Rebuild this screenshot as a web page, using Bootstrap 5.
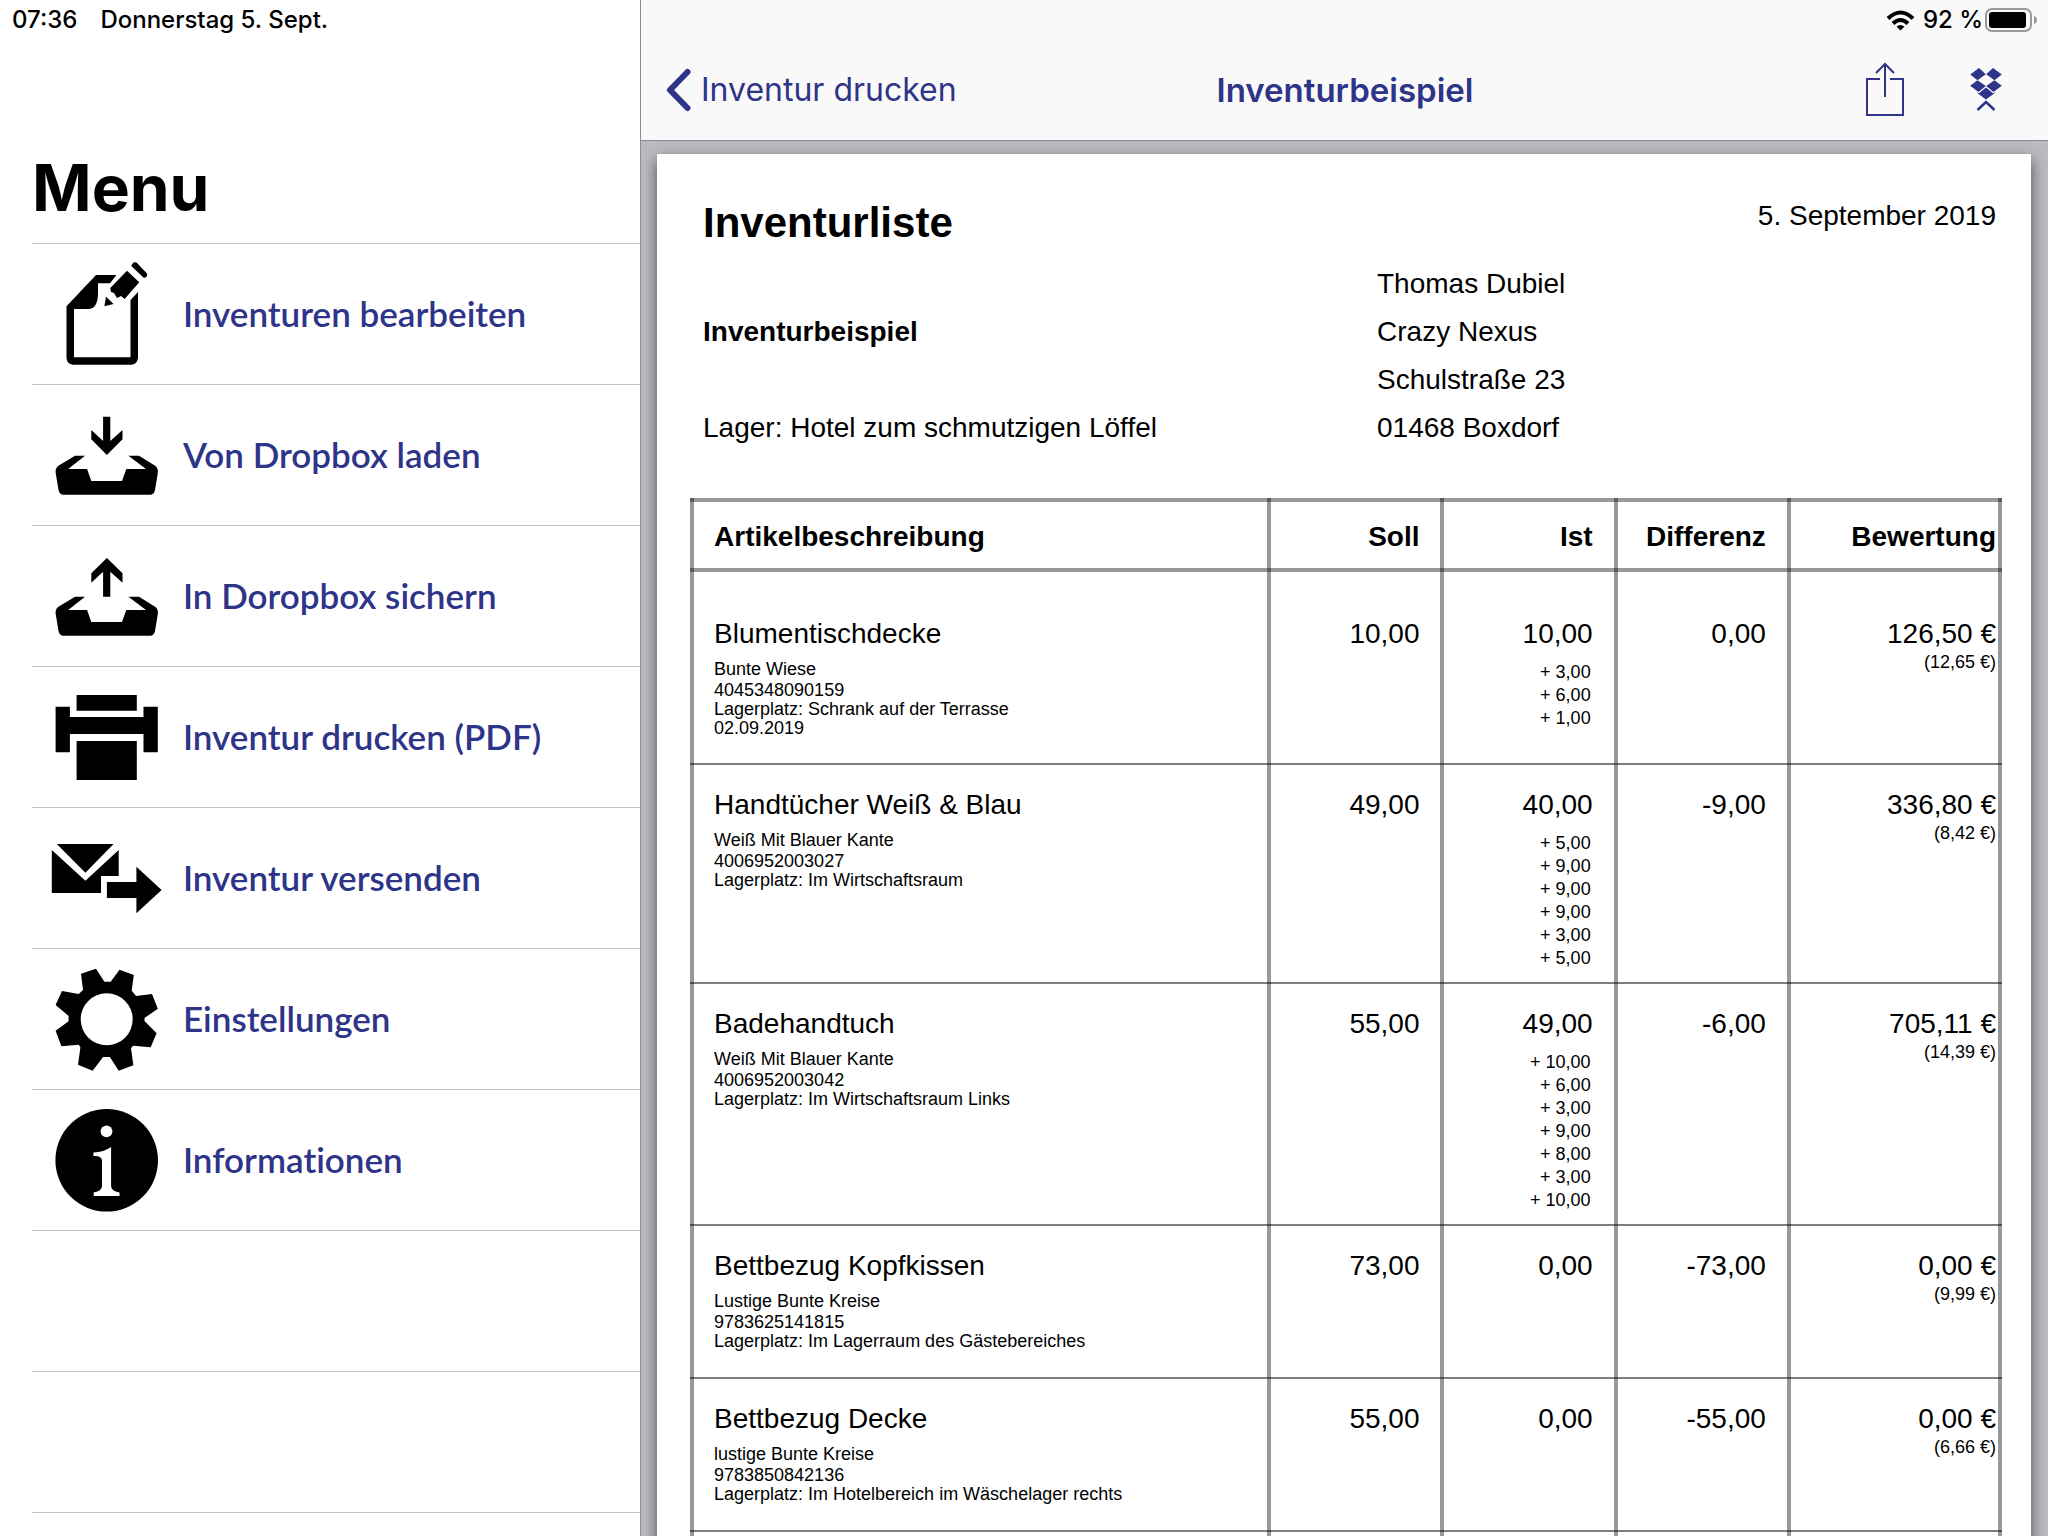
<!DOCTYPE html>
<html lang="de">
<head>
<meta charset="utf-8">
<meta name="viewport" content="width=device-width, initial-scale=1">
<title>Inventurbeispiel</title>
<link href="https://cdn.jsdelivr.net/npm/bootstrap@5.3.0/dist/css/bootstrap.min.css" rel="stylesheet">
<style>
  :root { --brand: #2e3488; --hairline: #c4c4c6; --rule: rgba(0, 0, 0, .4); }
  body { font-family: Inter, "Liberation Sans", sans-serif; color: #000; background: #fff; }
  .btn-plain { color: var(--brand); background: none; border: 0; padding: 0; line-height: 0; }
  .status { height: 40px; font-size: 24px; line-height: 40px; font-weight: 500; }

  .side { width: 31.3%; border-right: 1px solid #8e8e93; }
  .side .status { gap: 23px; padding-left: 12px; }
  .side-title { font-size: 64px; line-height: 72px; font-weight: 700; margin: 112px 0 19px 32px; }
  .side-list { margin-left: 32px; }
  .side-list li { height: 141px; border-top: 1px solid var(--hairline); }
  .side-list li:last-child { border-bottom: 1px solid var(--hairline); height: 142px; }
  .side-list a { height: 140px; gap: 20px; padding-left: 19px; color: var(--brand);
    font: 600 35px/40px Lato, "Open Sans", sans-serif; font-variant-ligatures: none; text-decoration: none; }
  .side-list svg { width: 112px; height: 112px; fill: #000; flex: none; }
  .side-list span { padding-bottom: 2px; }

  .topbar { background: #f9f9f9; border-bottom: 1px solid #8a8a8e; }
  .topbar .status { gap: 8px; padding-right: 10px; }
  .topbar .battery { gap: 1px; }
  .topnav { height: 100px; display: grid; grid-template-columns: 1fr auto 1fr; align-items: center;
    padding: 0 46px 0 25px; color: var(--brand); font-size: 32px; line-height: 40px; }
  .topnav a { color: var(--brand); text-decoration: none; gap: 9px; }
  .topnav h1 { font-size: 33px; line-height: 40px; font-weight: 600; margin: 0 0 0 22px; }
  .topnav .tools { gap: 65px; }

  .viewer { background: #bbbac0; padding: 13px 17px 0 16px; }
  .sheet { background: #fff; min-height: 100%; padding: 45px 29px 0 33px; box-shadow: 0 6px 14px rgba(0, 0, 0, .6);
    font: 28px/32px "Liberation Sans", Arial, sans-serif; }
  .sheet-head { padding: 0 6px 0 13px; }
  .sheet-title { font-size: 42px; line-height: 48px; font-weight: 700; margin-bottom: 13px; }
  .sheet-date { line-height: 34px; }
  .sheet-info { display: grid; grid-template-columns: 674fr 619fr; grid-auto-rows: 48px; line-height: 48px; margin-bottom: 46px; }

  .stock { --bs-table-bg: transparent; --bs-table-color: #000; table-layout: fixed; margin: 0;
    border-collapse: separate; border-spacing: 0; }
  .stock tr { border: 0; background: linear-gradient(rgba(0, 0, 0, .5), rgba(0, 0, 0, .5)) left bottom / 100% 2px no-repeat; }
  .stock thead tr { background: linear-gradient(var(--rule), var(--rule)) left bottom / 100% 4px no-repeat,
    linear-gradient(var(--rule), var(--rule)) left top / 100% 4px no-repeat; }
  .stock tr > * { border: 0 solid var(--rule); border-left-width: 4px; padding: 24px 21px 14px 0; text-align: right; box-shadow: none; }
  .stock tr > :first-child { text-align: left; padding: 24px 0 28px 20px; font-weight: 400; }
  .stock tr > :last-child { border-right-width: 4px; padding-right: 2px; }
  .stock thead tr > *, .stock thead tr > :first-child { padding-top: 23px; padding-bottom: 19px; font-weight: 700; }
  .stock tbody tr:first-child > * { padding-top: 46px; padding-bottom: 27px; }
  .stock .meta { font-size: 18px; line-height: 19px; margin-top: 10px; }
  .stock .ean { margin-top: 2px; }
  .stock .counts { font-size: 18px; line-height: 23px; margin: 11px 2px 0 0; }
  .stock .unit { font-size: 18px; line-height: 19px; margin-top: 3px; }
</style>
<script src="https://cdn.jsdelivr.net/npm/bootstrap@5.3.0/dist/js/bootstrap.bundle.min.js"></script>
</head>
<body>
<div class="d-flex vh-100 overflow-hidden">
  <aside class="side flex-shrink-0 overflow-hidden">
    <div class="status d-flex"><span>07:36</span><span>Donnerstag 5. Sept.</span></div>
    <h2 class="side-title">Menu</h2>
    <nav aria-label="Menu">
      <ul class="side-list list-unstyled mb-0">
        <li><a href="#" class="d-flex align-items-center">
          <svg viewBox="0 0 112 112" aria-hidden="true">
            <path fill-rule="evenodd" d="M15.500 48.300L45 17H65.500L59 25.300H47V36Q46.500 51 37.400 51H23V99.300H79.500V42L87 34V100Q86 106.700 80 106.700H22Q16 106 15.500 100Z"/>
            <path d="M80.300 8Q82 3 85.500 4.500L96 15.500Q97 19 93 20ZM76 12.700L88.300 24.300L73.600 41L70 38L66 40L63 35L60 34L59.300 30ZM55 38.700L62.600 46L53.400 48.300Z"/>
          </svg><span>Inventuren bearbeiten</span></a></li>
        <li><a href="#" class="d-flex align-items-center">
          <svg viewBox="0 0 112 112" aria-hidden="true">
            <path d="M52.100 17.700H59.300V42L71.500 31V40.300L55.900 56L40.300 40.300V31L52.100 42Z"/>
            <path id="tray" d="M24 56.700H34L17.200 70H36.100L40.300 82H71L75.300 70H95L77.400 56.700H88L104.500 67Q107.500 70 106.800 74L104 91Q103 95.700 99 95.700H12.500Q8.500 95.700 7.500 91L4.700 74Q4 70 7 67Z"/>
          </svg><span>Von Dropbox laden</span></a></li>
        <li><a href="#" class="d-flex align-items-center">
          <svg viewBox="0 0 112 112" aria-hidden="true">
            <path d="M52.100 56.700H59.300V31.700L71.500 42.700V33.300L55.900 18L40.300 33.300V42.700L52.100 31.700Z"/>
            <use href="#tray"/>
          </svg><span>In Doropbox sichern</span></a></li>
        <li><a href="#" class="d-flex align-items-center">
          <svg viewBox="0 0 112 112" aria-hidden="true">
            <path d="M25.600 14H85.800V29.700H25.600ZM4.600 25.700H18.900V36H92.500V25.700H106.800V71.300H92.500V53H18.900V71.300H4.600ZM25.600 60H85.800V99H25.600Z"/>
          </svg><span>Inventur drucken (PDF)</span></a></li>
        <li><a href="#" class="d-flex align-items-center">
          <svg viewBox="0 0 112 112" aria-hidden="true">
            <path d="M5.800 22H62.600L34.400 50.700ZM.8 28L34.400 58.700L67.700 28V54H50V71H.8ZM55.900 60H85.400V44.700L110.600 68L85.400 91.300V76H55.900Z"/>
          </svg><span>Inventur versenden</span></a></li>
        <li><a href="#" class="d-flex align-items-center">
          <svg viewBox="0 0 112 112" aria-hidden="true">
            <path fill-rule="evenodd" d="M30 10.700L45 5.700L53.400 18.700H59.700L68.500 6.700L82.800 12L80.700 27.700L85 33L101 31L106.800 45.700L93.500 55V58L105.600 70.300L99.700 84.300L82 82.700L80 85.300L82.400 102.300L67.700 107.700L58.800 94H52.100L41.600 107.700L27 101.700L29.400 84.300L27.700 81.700L10.400 83.300L4.600 67.700L17.600 58.300V53L4.600 42L11 28L27.700 31L32 27ZM81.700 56.300A26 26 0 1 0 29.700 56.300A26 26 0 1 0 81.700 56.300Z"/>
          </svg><span>Einstellungen</span></a></li>
        <li><a href="#" class="d-flex align-items-center">
          <svg viewBox="0 0 112 112" aria-hidden="true">
            <circle cx="55.700" cy="56.300" r="51.300"/>
            <circle cx="55.500" cy="27.300" r="5.900" fill="#fff"/>
            <path fill="#fff" d="M42.400 48.500Q53 48 60.100 43V82Q60 87 68.500 88.500V92H42.700V88.500Q51 87 51 82V57Q51 51.500 42.400 52Z"/>
          </svg><span>Informationen</span></a></li>
        <li aria-hidden="true"></li>
        <li aria-hidden="true"></li>
      </ul>
    </nav>
  </aside>

  <main class="d-flex flex-column flex-grow-1">
    <header class="topbar flex-shrink-0">
      <div class="status d-flex justify-content-end align-items-center">
        <svg width="29" height="21" viewBox="0 0 29 21" fill="none" stroke="#000" stroke-width="4" aria-hidden="true">
          <path d="M2 8.500Q14.500-3.500 27 8.500"/><path d="M7 13.500Q14.500 6.500 22 13.500"/><path d="M10.500 16.500Q14.500 13.500 18.500 16.500L14.500 20.500Z" fill="#000" stroke="none"/>
        </svg>
        <div class="battery d-flex align-items-center">
          <span>92 %</span>
          <svg width="54" height="26" viewBox="0 0 54 26" aria-hidden="true">
            <rect x="2" y="2" width="45" height="22" rx="6" fill="none" stroke="#98989a" stroke-width="2"/>
            <rect x="5" y="5" width="37" height="16" rx="3"/>
            <path d="M50 9Q53 10 53 13Q53 16 50 17Z" fill="#98989a"/>
          </svg>
        </div>
      </div>
      <nav class="topnav" aria-label="Dokument">
        <a href="#" class="d-flex align-items-center">
          <svg width="26" height="44" viewBox="0 0 26 44" fill="none" stroke="currentColor" stroke-width="6" stroke-linecap="round" stroke-linejoin="round" aria-hidden="true"><path d="M21.500 4L4 22L21.500 40"/></svg>
          <span>Inventur drucken</span></a>
        <h1>Inventurbeispiel</h1>
        <div class="tools d-flex justify-content-end align-items-center">
          <button type="button" class="btn-plain" aria-label="Teilen">
            <svg width="40" height="56" viewBox="0 0 40 56" fill="none" stroke="currentColor" stroke-width="2" aria-hidden="true"><path d="M15 17H2V53H38V17H25M20 35V2M11 11L20 2L29 11"/></svg>
          </button>
          <button type="button" class="btn-plain" aria-label="In Dropbox sichern">
            <svg width="32" height="46" viewBox="0 0 32 46" fill="currentColor" aria-hidden="true"><path d="M.2 7.500L9 1L15.800 7.300L7.500 13.200ZM31.800 7.500L23 1L16.200 7.300L24.500 13.200ZM.2 18.800L7.500 13.200L15.800 19L8.500 25ZM31.800 18.800L24.500 13.200L16.200 19L23.500 25ZM6.500 25.500L9 26.300L16 20.500L23 26.300L25.500 25.500L16 32.500Z"/><path d="M7.500 43L16 35L24.500 43" fill="none" stroke="currentColor" stroke-width="2.500"/></svg>
          </button>
        </div>
      </nav>
    </header>

    <section class="viewer flex-grow-1 overflow-hidden">
      <article class="sheet">
        <div class="sheet-head">
          <div class="d-flex justify-content-between align-items-start">
            <h2 class="sheet-title">Inventurliste</h2>
            <div class="sheet-date">5. September 2019</div>
          </div>
          <div class="sheet-info">
            <div></div><div>Thomas Dubiel</div>
            <div class="fw-bold">Inventurbeispiel</div><div>Crazy Nexus</div>
            <div></div><div>Schulstraße 23</div>
            <div>Lager: Hotel zum schmutzigen Löffel</div><div>01468 Boxdorf</div>
          </div>
        </div>
        <table class="table stock">
          <colgroup><col style="width:44%"><col style="width:13.2%"><col style="width:13.2%"><col style="width:13.2%"><col style="width:16.4%"></colgroup>
          <thead>
            <tr><th scope="col">Artikelbeschreibung</th><th scope="col">Soll</th><th scope="col">Ist</th><th scope="col">Differenz</th><th scope="col">Bewertung</th></tr>
          </thead>
          <tbody>
            <tr>
              <th scope="row">Blumentischdecke<div class="meta"><div>Bunte Wiese</div><div class="ean">4045348090159</div><div>Lagerplatz: Schrank auf der Terrasse</div><div>02.09.2019</div></div></th>
              <td>10,00</td>
              <td>10,00<div class="counts"><div>+ 3,00</div><div>+ 6,00</div><div>+ 1,00</div></div></td>
              <td>0,00</td>
              <td>126,50 €<div class="unit">(12,65 €)</div></td>
            </tr>
            <tr>
              <th scope="row">Handtücher Weiß &amp; Blau<div class="meta"><div>Weiß Mit Blauer Kante</div><div class="ean">4006952003027</div><div>Lagerplatz: Im Wirtschaftsraum</div></div></th>
              <td>49,00</td>
              <td>40,00<div class="counts"><div>+ 5,00</div><div>+ 9,00</div><div>+ 9,00</div><div>+ 9,00</div><div>+ 3,00</div><div>+ 5,00</div></div></td>
              <td>-9,00</td>
              <td>336,80 €<div class="unit">(8,42 €)</div></td>
            </tr>
            <tr>
              <th scope="row">Badehandtuch<div class="meta"><div>Weiß Mit Blauer Kante</div><div class="ean">4006952003042</div><div>Lagerplatz: Im Wirtschaftsraum Links</div></div></th>
              <td>55,00</td>
              <td>49,00<div class="counts"><div>+ 10,00</div><div>+ 6,00</div><div>+ 3,00</div><div>+ 9,00</div><div>+ 8,00</div><div>+ 3,00</div><div>+ 10,00</div></div></td>
              <td>-6,00</td>
              <td>705,11 €<div class="unit">(14,39 €)</div></td>
            </tr>
            <tr>
              <th scope="row">Bettbezug Kopfkissen<div class="meta"><div>Lustige Bunte Kreise</div><div class="ean">9783625141815</div><div>Lagerplatz: Im Lagerraum des Gästebereiches</div></div></th>
              <td>73,00</td>
              <td>0,00</td>
              <td>-73,00</td>
              <td>0,00 €<div class="unit">(9,99 €)</div></td>
            </tr>
            <tr>
              <th scope="row">Bettbezug Decke<div class="meta"><div>lustige Bunte Kreise</div><div class="ean">9783850842136</div><div>Lagerplatz: Im Hotelbereich im Wäschelager rechts</div></div></th>
              <td>55,00</td>
              <td>0,00</td>
              <td>-55,00</td>
              <td>0,00 €<div class="unit">(6,66 €)</div></td>
            </tr>
            <tr><td></td><td></td><td></td><td></td><td></td></tr>
          </tbody>
        </table>
      </article>
    </section>
  </main>
</div>
</body>
</html>
